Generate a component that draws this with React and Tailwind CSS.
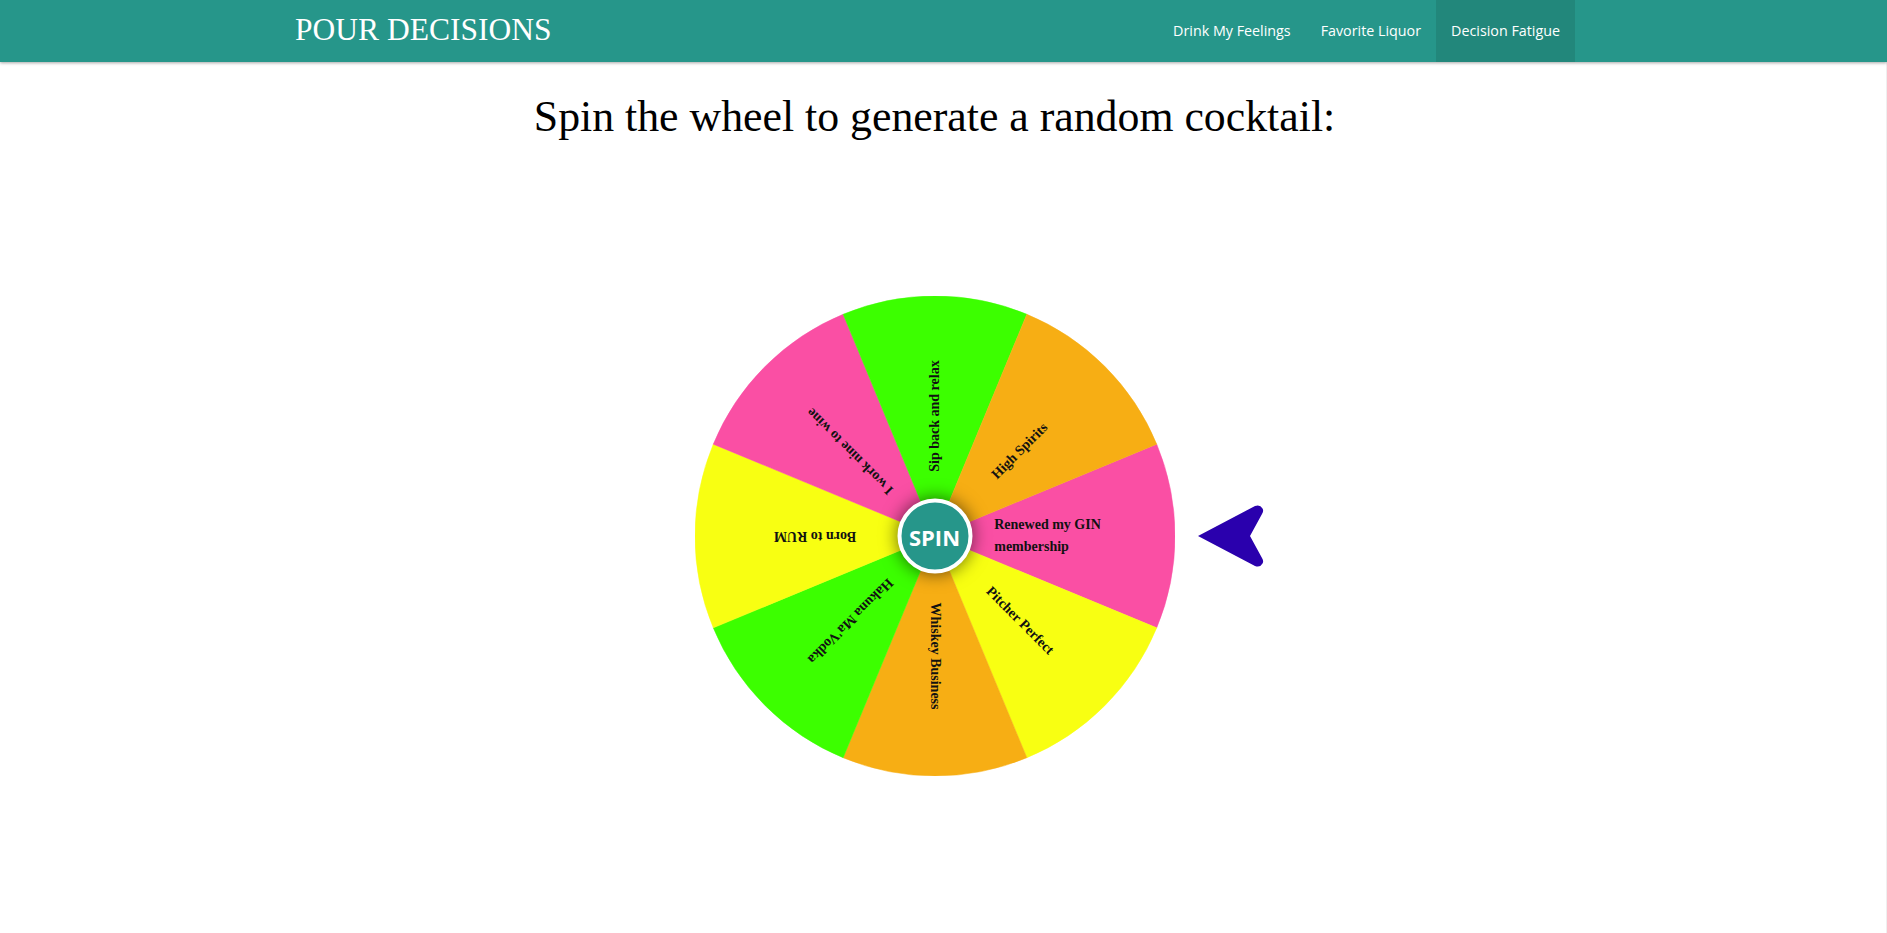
import { useMemo } from "react";

const PINK = "#fa4fa4";
const YELLOW = "#f8ff12";
const ORANGE = "#f7ae14";
const GREEN = "#3cff00";

// angle: css degrees, 0 = right, clockwise
const SLICES = [
  { angle: 0, color: PINK, lines: ["Renewed my GIN", "membership"], r: 113 },
  { angle: 45, color: YELLOW, lines: ["Pitcher Perfect"] },
  { angle: 90, color: ORANGE, lines: ["Whiskey Business"] },
  { angle: 135, color: GREEN, lines: ["Hakuna Ma'Vodka"] },
  { angle: 180, color: YELLOW, lines: ["Born to RUM"] },
  { angle: 225, color: PINK, lines: ["I work nine to wine"] },
  { angle: 270, color: GREEN, lines: ["Sip back and relax"] },
  { angle: 315, color: ORANGE, lines: ["High Spirits"] },
];

const NAV = ["Drink My Feelings", "Favorite Liquor", "Decision Fatigue"];

const slicePath = (angle, radius) => {
  const a0 = ((angle - 22.5) * Math.PI) / 180;
  const a1 = ((angle + 22.5) * Math.PI) / 180;
  const x0 = radius * Math.cos(a0);
  const y0 = radius * Math.sin(a0);
  const x1 = radius * Math.cos(a1);
  const y1 = radius * Math.sin(a1);
  return `M0 0 L${x0} ${y0} A${radius} ${radius} 0 0 1 ${x1} ${y1} Z`;
};

const Wheel = () => {
  const paths = useMemo(
    () => SLICES.map((s) => ({ ...s, d: slicePath(s.angle, 240) })),
    []
  );

  return (
    <div className="relative w-[480px] h-[480px]">
      <svg
        width="480"
        height="480"
        viewBox="-240 -240 480 480"
        className="absolute inset-0"
      >
        {paths.map((s) => (
          <path key={s.angle} d={s.d} fill={s.color} stroke={s.color} strokeWidth="0.5" />
        ))}
      </svg>

      {/* Labels */}
      {SLICES.map((s) => (
        <div
          key={s.angle}
          className="absolute left-1/2 top-1/2 w-[240px] h-0 origin-left"
          style={{ transform: `rotate(${s.angle}deg)` }}
        >
          <div
            className="absolute top-0 -translate-x-1/2 -translate-y-1/2 whitespace-nowrap text-left text-[14px] leading-[22px] font-bold text-[#111]"
            style={{ left: `${s.r || 120}px` }}
          >
            {s.lines.map((l) => (
              <div key={l}>{l}</div>
            ))}
          </div>
        </div>
      ))}

      {/* Spin button */}
      <div className="absolute left-1/2 top-1/2 -translate-x-1/2 -translate-y-1/2 w-[75px] h-[75px] rounded-full bg-[#26968a] border-4 border-white shadow-[0_0_18px_rgba(0,0,0,0.6)] flex items-center justify-center">
        <span className="text-white text-[22px] font-bold font-['Open_Sans',sans-serif] leading-none">
          SPIN
        </span>
      </div>

      {/* Pointer */}
      <svg
        width="80"
        height="80"
        viewBox="0 0 80 80"
        className="absolute left-[495px] top-[199px]"
      >
        <path
          d="M8 41 L65 11 Q70 9 72.5 13.5 Q74 16 72 19 L60 41 L72 63 Q74 66 72.5 68.5 Q70 73 65 71 Z"
          fill="#2a00ad"
        />
      </svg>
    </div>
  );
};

export default function App() {
  return (
    <div className="min-h-screen bg-white font-['Liberation_Serif',serif] text-black">
      {/* Navbar */}
      <nav className="h-[62px] bg-[#26968a] shadow-[0_1px_3px_rgba(0,0,0,0.35)] relative z-10">
        <div className="pr-[17px] h-full">
          <div className="w-[1310px] mx-auto h-full flex items-stretch justify-between">
            <div className="flex items-center pl-[15px] pb-[3px] text-white text-[31.5px] leading-none">
              POUR DECISIONS
            </div>
            <ul className="flex items-stretch pr-[15px]">
              {NAV.map((item, i) => (
                <li
                  key={item}
                  className={`flex items-center px-[15px] text-white text-[14.3px] font-['Open_Sans',sans-serif] ${
                    i === NAV.length - 1 ? "bg-[#22877b]" : ""
                  }`}
                >
                  {item}
                </li>
              ))}
            </ul>
          </div>
        </div>
      </nav>

      {/* Main */}
      <main className="pr-[17px] border-r border-[#efefef] min-h-[871px]">
        <div className="flex flex-col items-center">
          <h1 className="mt-[32px] text-[43.8px] leading-[44px] font-normal">
            Spin the wheel to generate a random cocktail:
          </h1>
          <div className="mt-[158px]">
            <Wheel />
          </div>
        </div>
      </main>
    </div>
  );
}
